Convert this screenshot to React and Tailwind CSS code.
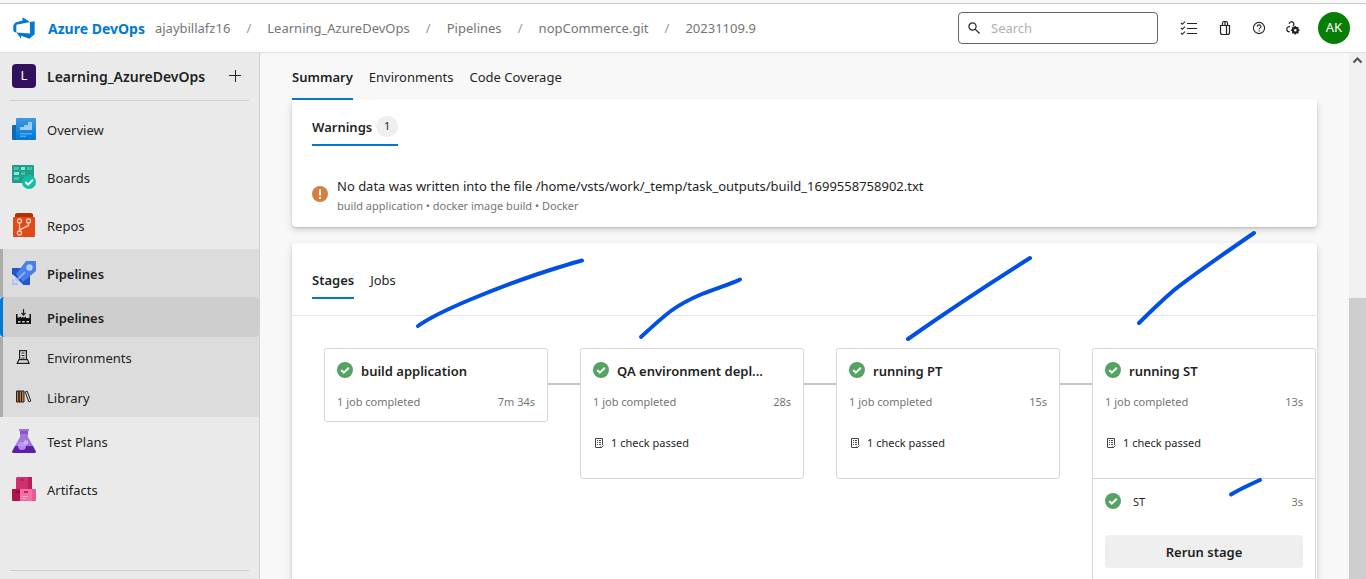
import React from "react";

const STAGES = [
  { name: "build application", time: "7m 34s", check: false },
  { name: "QA environment depl...", time: "28s", check: true },
  { name: "running PT", time: "15s", check: true },
  { name: "running ST", time: "13s", check: true, job: { name: "ST", time: "3s" } },
];

const CRUMBS = ["ajaybillafz16", "Learning_AzureDevOps", "Pipelines", "nopCommerce.git", "20231109.9"];

function DevOpsLogo() {
  return (
    <svg viewBox="0 0 18 18" className="size-6 shrink-0" aria-hidden="true">
      <path
        fill="#0078d4"
        d="M17 4v9.74l-4 3.28-6.2-2.26V17l-3.51-4.59 10.23.8V4.44L17 4zm-3.41.49L7.85 1v2.29L2.58 4.84 1 6.87v4.61l2.26 1V6.57l10.33-2.08z"
      />
    </svg>
  );
}

function OverviewIcon() {
  return (
    <svg viewBox="0 0 24 24" className="size-6 shrink-0" aria-hidden="true">
      <defs>
        <linearGradient id="ov" x1="0" y1="0" x2="0" y2="1">
          <stop offset="0" stopColor="#3c9ae4" />
          <stop offset="1" stopColor="#0078d4" />
        </linearGradient>
      </defs>
      <path fill="#1268b3" d="M1 8h4v15H1a1 1 0 0 1-1-1V9a1 1 0 0 1 1-1z" />
      <path fill="url(#ov)" d="M5 1h18a1 1 0 0 1 1 1v20a1 1 0 0 1-1 1H4V2a1 1 0 0 1 1-1z" />
      <path fill="#9cccf5" d="M8 13v-3h4V8h4V5h4v8z" />
      <path fill="#50a8ee" d="M8 16h12v1.5H8zM8 18.500h6V20H8z" />
    </svg>
  );
}

function BoardsIcon() {
  return (
    <svg viewBox="0 0 24 24" className="size-6 shrink-0" aria-hidden="true">
      <rect width="22" height="18" rx="1" fill="#259c88" />
      <path fill="#35c9a8" d="M2 2h5v3H2zM15 2h5v3h-5zM9 7h4v3H9zM2 12h5v3H2z" />
      <path fill="#7deed0" d="M9 2h4v3H9zM2 7h5v3H2z" />
      <circle cx="17" cy="17" r="7" fill="#12bfa5" />
      <path d="m13.300 17 2.700 2.700 5-5" fill="none" stroke="#fff" strokeWidth="2" />
    </svg>
  );
}

function ReposIcon() {
  return (
    <svg viewBox="0 0 24 24" className="size-6 shrink-0" aria-hidden="true">
      <path fill="#b52f00" d="M5 0h14l2 1v4H3V1z" />
      <path fill="#df4a16" d="M1 5a1 1 0 0 1 1-1h20a1 1 0 0 1 1 1v18a1 1 0 0 1-1 1H2a1 1 0 0 1-1-1z" />
      <g fill="none" stroke="#ffc9b3" strokeWidth="1.4">
        <circle cx="7.500" cy="8" r="2" />
        <circle cx="16.500" cy="8" r="2" />
        <circle cx="7.500" cy="20" r="2" />
        <path d="M7.500 10v8M16.500 10v2.500l-9 4.500" />
      </g>
    </svg>
  );
}

function RocketIcon() {
  return (
    <svg viewBox="0 0 24 24" className="size-6 shrink-0" aria-hidden="true">
      <path fill="#1f56c9" d="M0 7h9l9 8v9h-6.500L8 20.500 4 16l-4-3z" />
      <path fill="#4a7fe8" d="M14 0h9a1 1 0 0 1 1 1v9L11 21 4 13z" />
      <circle cx="17.500" cy="6.500" r="3.200" fill="#b4cdfb" />
      <path d="m6 18 7-7" stroke="#86adf5" strokeWidth="2" />
      <path fill="#a6c3fa" d="M0 18h2v4h4v2H0zM3 15.500 8 21l-3-.5-2-2z" />
    </svg>
  );
}

function FlaskIcon() {
  return (
    <svg viewBox="0 0 24 24" className="size-6 shrink-0" aria-hidden="true">
      <path fill="#a277dc" d="M7 0h10v2h-1v6l5 9H3l5-9V2H7z" />
      <path fill="#8455cc" d="M8 2h8v3H8z" />
      <path fill="#5c1fa8" d="M3 17h18l2.700 5c.5 1-.2 2-1.200 2H1.500C.5 24-.2 23 .3 22z" />
      <circle cx="10" cy="17" r="4" fill="#c29cf0" opacity=".85" />
      <circle cx="14" cy="13.500" r="2.300" fill="#d6bbf5" opacity=".8" />
    </svg>
  );
}

function BoxesIcon() {
  return (
    <svg viewBox="0 0 24 24" className="size-6 shrink-0" aria-hidden="true">
      <path fill="#d0306f" d="M5 0h15v12H4V1z" />
      <path fill="#b91f5c" d="M16 0h4v12h-4zM8 2h4v2H8z" />
      <path fill="#b0134f" d="M0 12h8v12H1a1 1 0 0 1-1-1z" />
      <path fill="#7f0b38" d="M4 14h4v2H4z" />
      <path fill="#f070a3" d="M8 12h16v11a1 1 0 0 1-1 1H8z" />
      <path fill="#e85a92" d="M20 12h4v12h-4z" />
      <path fill="#c42463" d="M12 14h4v2h-4z" />
      <path fill="#f9a5c6" d="M10 19h6v1h-6zM10 21h4v1h-4z" />
    </svg>
  );
}

function FactoryIcon() {
  return (
    <svg viewBox="0 0 16 16" className="size-4 shrink-0" aria-hidden="true">
      <path d="M7.500 0v6M5.500 4l2 2.200 2-2.200" fill="none" stroke="#222" strokeWidth="1.200" />
      <path
        fill="#111"
        fillRule="evenodd"
        d="M0 5h1.500v3.500H3L5 7.500v1.500l2.500-1.500V9L10 7.500V9h3.500V5H15v10H0zM2 12v1.500h2.500V12zm4.200 0v1.500h2.500V12zm4.300 0v1.500H13V12z"
      />
    </svg>
  );
}

function ServerIcon() {
  return (
    <svg viewBox="0 0 16 16" className="size-4 shrink-0" aria-hidden="true">
      <g fill="none" stroke="#222" strokeWidth="1.200">
        <path d="M3.600 10.500V1.600h6.800v8.900M5.500 4h3M5.500 6.500h3M5.500 9h3" />
        <path d="M3 10.600h8.500l1.500 3.800H1.200z" />
      </g>
    </svg>
  );
}

function LibraryIcon() {
  return (
    <svg viewBox="0 0 16 16" className="size-4 shrink-0" aria-hidden="true">
      <g fill="#c07a3c" stroke="#222" strokeWidth="1">
        <path d="M.5 2h2.500v11H.5zM3 2h2.500v11H3zM5.500 2H8v11H5.500z" />
        <path fill="none" d="m9.200 3 2-.8 3.600 9.800-2 .8z" />
      </g>
    </svg>
  );
}

function CheckCircle() {
  return (
    <svg viewBox="0 0 16 16" className="size-4 shrink-0" aria-hidden="true">
      <circle cx="8" cy="8" r="8" fill="#55a362" />
      <path d="m4.300 8.200 2.500 2.500 5-5" fill="none" stroke="#fff" strokeWidth="2" />
    </svg>
  );
}

function ChecklistDoc() {
  return (
    <svg viewBox="0 0 12 12" className="size-3 shrink-0" aria-hidden="true">
      <g fill="none" stroke="#444" strokeWidth="1">
        <path d="M9.500 8V1.500h-7v8.500q0 .5.500.5h6" />
        <path d="M4 3.500h1M6 3.500h2M4 5.500h1M6 5.500h2M4 7.500h1M6 7.500h2M7.500 9.500l1 1 2-2" />
      </g>
    </svg>
  );
}

function NavItem({ icon, label }) {
  return (
    <a href="#" className="flex h-12 items-center gap-[11px] pl-3 text-[13px]">
      {icon}
      <span className="pt-1">{label}</span>
    </a>
  );
}

function SubItem({ icon, label, active }) {
  return (
    <a
      href="#"
      className={
        "flex h-10 items-center gap-[15px] border-l-[3px] pl-[13px] text-[13px] " +
        (active ? "rounded-sm border-[#0078d4] bg-[#cecece] font-semibold" : "border-[#acacac]")
      }
    >
      {icon}
      <span className="pt-1">{label}</span>
    </a>
  );
}

function Sidebar() {
  return (
    <nav className="flex w-[260px] shrink-0 flex-col border-r border-[#d0d0d0] bg-[#eaeaea]" aria-label="Project">
      <div className="mx-[10px] flex h-12 shrink-0 items-center border-b border-[#cfcfcf] pb-px pl-0.5">
        <span className="flex size-6 items-center justify-center rounded bg-[#32105c] text-[13px] text-white">L</span>
        <a href="#" className="ml-[11px] grow pt-0.5 text-sm font-semibold">
          Learning_AzureDevOps
        </a>
        <button type="button" aria-label="Add" className="mr-2">
          <svg viewBox="0 0 12 12" className="size-3" aria-hidden="true">
            <path d="M6.500 0v12M0 5.500h12" stroke="#222" />
          </svg>
        </button>
      </div>
      <div className="flex grow flex-col pt-1">
        <NavItem icon={<OverviewIcon />} label="Overview" />
        <NavItem icon={<BoardsIcon />} label="Boards" />
        <NavItem icon={<ReposIcon />} label="Repos" />
        <div className="bg-[#dcdcdc]">
          <a href="#" className="flex h-12 items-center gap-[11px] border-l-[3px] border-[#acacac] pl-[9px] text-[13px] font-semibold">
            <RocketIcon />
            <span className="pt-1">Pipelines</span>
          </a>
          <SubItem icon={<FactoryIcon />} label="Pipelines" active />
          <SubItem icon={<ServerIcon />} label="Environments" />
          <SubItem icon={<LibraryIcon />} label="Library" />
        </div>
        <NavItem icon={<FlaskIcon />} label="Test Plans" />
        <NavItem icon={<BoxesIcon />} label="Artifacts" />
      </div>
      <div className="mx-[10px] h-[9px] shrink-0 border-t border-[#cfcfcf]" />
    </nav>
  );
}

function Header() {
  return (
    <header className="flex h-[49px] shrink-0 items-center border-b border-[#e0e0e0] bg-white pr-4 pl-3">
      <DevOpsLogo />
      <a href="#" className="ml-3 pt-0.5 text-sm font-bold text-[#0078d4]">
        Azure DevOps
      </a>
      <ol className="ml-[10px] flex grow items-center pt-0.5 text-[13px] text-[#757575]">
        {CRUMBS.map((c, i) => (
          <li key={c} className="flex items-center">
            {i > 0 && <span className="w-[37px] text-center text-[#999]">/</span>}
            <a href="#">{c}</a>
          </li>
        ))}
      </ol>
      <label className="flex h-8 w-[200px] items-center gap-2 rounded-sm border border-[#666] px-[9px]">
        <svg viewBox="0 0 12 12" className="size-3 shrink-0" aria-hidden="true">
          <g fill="none" stroke="#222" strokeWidth="1.200">
            <circle cx="4.500" cy="4.500" r="3.600" />
            <path d="m7.200 7.200 4.300 4.300" />
          </g>
        </svg>
        <input
          type="search"
          aria-label="Search"
          placeholder="Search"
          className="w-full min-w-0 bg-transparent pt-0.5 pl-[3px] text-[13px] outline-none placeholder:text-[#b0b0b0]"
        />
      </label>
      <div className="ml-[22px] flex items-center gap-[18px]">
        <button type="button" aria-label="Work items">
          <svg viewBox="0 0 18 16" className="h-4 w-[18px]" aria-hidden="true">
            <g fill="none" stroke="#222" strokeWidth="1.100">
              <path d="M7 3.500h10M7 8.500h10M7 13.500h10" />
              <path d="m1 3 1.300 1.300L5 1.600M1 8l1.300 1.300L5 6.600M1 13l1.300 1.300L5 11.600" />
            </g>
          </svg>
        </button>
        <button type="button" aria-label="Marketplace">
          <svg viewBox="0 0 16 16" className="size-4" aria-hidden="true">
            <g fill="none" stroke="#222" strokeWidth="1.200">
              <path d="M4.500 5.500h9v7q0 2-2 2h-5q-2 0-2-2zM10.500 5.500v9" />
              <path d="M6.500 5.500V3q0-1.500 1.500-1.500h2q1.500 0 1.500 1.500v2.500M9 1.500v4" />
            </g>
          </svg>
        </button>
        <button type="button" aria-label="Help">
          <svg viewBox="0 0 16 16" className="size-4" aria-hidden="true">
            <g fill="none" stroke="#222" strokeWidth="1.100">
              <circle cx="9" cy="8" r="5.600" />
              <path d="M7.200 6.800q0-1.900 1.900-1.900t1.900 1.600c0 1.400-1.900 1.400-1.900 2.800M9.100 10.200v1.300" />
            </g>
          </svg>
        </button>
        <button type="button" aria-label="User settings">
          <svg viewBox="0 0 16 16" className="size-4" aria-hidden="true">
            <g fill="none" stroke="#222" strokeWidth="1.200">
              <path d="M5.200 3.800a2.400 2.400 0 1 1 3.600 2.400M6 6.600C4 6.200 2.800 7.600 2.800 9.200c0 1.800 1.200 2.600 3 2.600" />
              <circle cx="11.300" cy="10.300" r="2.400" strokeWidth="2.200" />
              <path
                strokeWidth="1.600"
                d="M11.300 6v1.500M11.300 13.100v1.500M7 10.300h1.500M14.100 10.300h1.500M8.300 7.300l1 1M13.300 12.300l1 1M14.300 7.300l-1 1M9.300 12.300l-1 1"
              />
            </g>
          </svg>
        </button>
        <button type="button" className="flex size-8 items-center justify-center rounded-full bg-[#077f07] text-[13px] text-white">
          AK
        </button>
      </div>
    </header>
  );
}

function StageCard({ stage }) {
  return (
    <article className="w-56 shrink-0 rounded-[3px] border border-[#d6d6d6] bg-white">
      <div className={"px-3 pt-[11px] " + (stage.check ? "h-[129px]" : "h-[72px]")}>
        <h3 className="flex h-5 items-center gap-2 text-[13px] font-semibold">
          <CheckCircle />
          <span className="pt-1">{stage.name}</span>
        </h3>
        <p className="mt-[14px] flex h-4 items-center justify-between text-[11px] text-[#757575]">
          <span>1 job completed</span>
          <span>{stage.time}</span>
        </p>
        {stage.check && (
          <p className="mt-[25px] flex h-4 items-center gap-1.5 text-[11px]">
            <ChecklistDoc />
            1 check passed
          </p>
        )}
      </div>
      {stage.job && (
        <div className="border-t border-[#d6d6d6] px-3 pt-[14px] pb-3">
          <p className="flex h-4 items-center text-[11px]">
            <CheckCircle />
            <a href="#" className="ml-3 grow pt-0.5">
              {stage.job.name}
            </a>
            <span className="pt-0.5 text-[#757575]">{stage.job.time}</span>
          </p>
          <button type="button" className="mt-[26px] h-[33px] w-full rounded-sm bg-[#efefef] pt-0.5 text-[13px] font-semibold">
            Rerun stage
          </button>
        </div>
      )}
    </article>
  );
}

function Strokes() {
  return (
    <svg viewBox="0 0 1366 579" className="pointer-events-none absolute top-0 left-0 h-[579px] w-[1366px]" aria-hidden="true">
      <g fill="none" stroke="#0050e6" strokeWidth="4" strokeLinecap="round" strokeLinejoin="round">
        <path d="M418 326C440 310 500 287 535 275Q565 265 582 260.500" />
        <path d="M641 337C668 312 676 305 702 294C714 289 734 283 740 279.500" />
        <path d="M908 339Q962 301 1030 258" />
        <path d="M1139 323Q1158 304 1173 291Q1190 277 1254 233" />
        <path d="M1231 494.500Q1240 489 1260 480" />
      </g>
    </svg>
  );
}

export default function App() {
  return (
    <div className="relative flex h-screen flex-col overflow-hidden bg-white font-['Noto_Sans','Open_Sans',sans-serif] text-[#1f1f1f]">
      <div className="h-1 shrink-0 border-b border-[#c9c9cd] bg-[#f8f8fb]" />
      <Header />
      <div className="flex min-h-0 grow">
        <Sidebar />
        <main className="flex min-w-0 grow flex-col overflow-hidden bg-[#f8f8f8]">
          <div className="flex h-[47px] shrink-0 gap-4 px-8 text-[13px]" role="tablist">
            <button type="button" role="tab" aria-selected="true" className="border-b-2 border-[#0078d4] pt-1 font-semibold">
              Summary
            </button>
            <button type="button" role="tab" aria-selected="false" className="border-b-2 border-transparent pt-1">
              Environments
            </button>
            <button type="button" role="tab" aria-selected="false" className="border-b-2 border-transparent pt-1">
              Code Coverage
            </button>
          </div>
          <div className="flex min-h-0 grow flex-col gap-4 overflow-hidden px-8">
            <section className="h-[127px] shrink-0 rounded-b bg-white px-5 shadow-[0_3px_7px_rgba(0,0,0,0.16),0_1px_2px_rgba(0,0,0,0.14)]">
              <h2 className="flex h-[46px] w-fit items-center gap-1 border-b-2 border-[#0078d4] pt-[9px] text-[13px] font-semibold">
                <span className="pt-0.5">Warnings</span>
                <span className="flex h-[21px] w-[22px] items-center justify-center rounded-full bg-[#efefef] text-[11px] font-normal">1</span>
              </h2>
              <div className="mt-[30px] flex items-start gap-[9px]">
                <svg viewBox="0 0 16 16" className="mt-[10px] size-4 shrink-0" aria-hidden="true">
                  <circle cx="8" cy="8" r="8" fill="#d67f3c" />
                  <path d="M8 3.200v6.300M8 11v2" stroke="#fff" strokeWidth="2" />
                </svg>
                <div>
                  <p className="text-[13px] leading-5">
                    <a href="#">No data was written into the file /home/vsts/work/_temp/task_outputs/build_1699558758902.txt</a>
                  </p>
                  <p className="text-[11px] leading-5 text-[#757575]">build application • docker image build • Docker</p>
                </div>
              </div>
            </section>
            <section className="shrink-0 rounded-t bg-white pb-8 shadow-[0_3px_7px_rgba(0,0,0,0.16),0_1px_2px_rgba(0,0,0,0.14)]">
              <div className="flex h-[73px] gap-4 border-b border-[#e8e8e8] px-5 pt-[18px] pb-4 text-[13px]" role="tablist">
                <button type="button" role="tab" aria-selected="true" className="border-b-2 border-[#0078d4] pt-1 font-semibold">
                  Stages
                </button>
                <button type="button" role="tab" aria-selected="false" className="border-b-2 border-transparent pt-1">
                  Jobs
                </button>
              </div>
              <div className="flex items-start overflow-hidden pt-8 pl-8">
                {STAGES.map((s, i) => (
                  <React.Fragment key={s.name}>
                    {i > 0 && <span className="mt-[35px] h-0.5 w-8 shrink-0 bg-[#c8c8c8]" />}
                    <StageCard stage={s} />
                  </React.Fragment>
                ))}
              </div>
            </section>
          </div>
        </main>
        <div className="flex w-[17px] shrink-0 flex-col bg-[#f0f0f0]" aria-hidden="true">
          <svg viewBox="0 0 17 17" className="size-[17px]">
            <path d="m4.500 9.500 4-4 4 4" fill="none" stroke="#505050" strokeWidth="2" />
          </svg>
          <div className="mt-[228px] grow bg-[#cdcdcd]" />
        </div>
      </div>
      <Strokes />
    </div>
  );
}
